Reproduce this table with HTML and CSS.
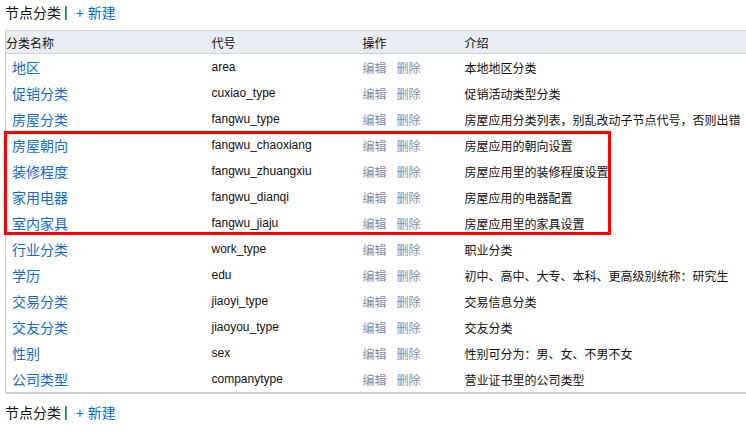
FILE: index.html
```html
<!DOCTYPE html>
<html>
<head>
<meta charset="utf-8">
<link rel="stylesheet" href="styles.css">
</head>
<body>
<div class="page">
  <div class="bar"><span class="title">节点分类</span><span class="sep">|</span><a class="add">+ 新建</a></div>
  <div class="wrap">
    <table class="grid">
      <colgroup><col class="c1"><col class="c2"><col class="c3"><col class="c4"></colgroup>
      <thead>
        <tr><th class="first">分类名称</th><th>代号</th><th>操作</th><th>介绍</th></tr>
      </thead>
      <tbody>
        <tr><td class="name">地区</td><td>area</td><td class="ops"><a>编辑</a><a>删除</a></td><td>本地地区分类</td></tr>
        <tr><td class="name">促销分类</td><td>cuxiao_type</td><td class="ops"><a>编辑</a><a>删除</a></td><td>促销活动类型分类</td></tr>
        <tr><td class="name">房屋分类</td><td>fangwu_type</td><td class="ops"><a>编辑</a><a>删除</a></td><td>房屋应用分类列表，别乱改动子节点代号，否则出错</td></tr>
        <tr><td class="name">房屋朝向</td><td>fangwu_chaoxiang</td><td class="ops"><a>编辑</a><a>删除</a></td><td>房屋应用的朝向设置</td></tr>
        <tr><td class="name">装修程度</td><td>fangwu_zhuangxiu</td><td class="ops"><a>编辑</a><a>删除</a></td><td>房屋应用里的装修程度设置</td></tr>
        <tr><td class="name">家用电器</td><td>fangwu_dianqi</td><td class="ops"><a>编辑</a><a>删除</a></td><td>房屋应用的电器配置</td></tr>
        <tr><td class="name">室内家具</td><td>fangwu_jiaju</td><td class="ops"><a>编辑</a><a>删除</a></td><td>房屋应用里的家具设置</td></tr>
        <tr><td class="name">行业分类</td><td>work_type</td><td class="ops"><a>编辑</a><a>删除</a></td><td>职业分类</td></tr>
        <tr><td class="name">学历</td><td>edu</td><td class="ops"><a>编辑</a><a>删除</a></td><td>初中、高中、大专、本科、更高级别统称：研究生</td></tr>
        <tr><td class="name">交易分类</td><td>jiaoyi_type</td><td class="ops"><a>编辑</a><a>删除</a></td><td>交易信息分类</td></tr>
        <tr><td class="name">交友分类</td><td>jiaoyou_type</td><td class="ops"><a>编辑</a><a>删除</a></td><td>交友分类</td></tr>
        <tr><td class="name">性别</td><td>sex</td><td class="ops"><a>编辑</a><a>删除</a></td><td>性别可分为：男、女、不男不女</td></tr>
        <tr><td class="name">公司类型</td><td>companytype</td><td class="ops"><a>编辑</a><a>删除</a></td><td>营业证书里的公司类型</td></tr>
      </tbody>
    </table>
    <div class="highlight"></div>
  </div>
  <div class="bar bottom"><span class="title">节点分类</span><span class="sep">|</span><a class="add">+ 新建</a></div>
</div>
</body>
</html>
```
FILE: styles.css
```css
html, body {
  margin: 0;
  padding: 0;
  background: #fff;
  overflow: hidden;
}
body {
  font-family: "Liberation Sans", "Noto Sans CJK SC", sans-serif;
  font-size: 12px;
  color: #000;
}
.page {
  padding-left: 5px;
}
.bar {
  height: 30px;
  display: flex;
  align-items: center;
  font-size: 14px;
  padding-bottom: 6px;
  box-sizing: border-box;
}
.bar.bottom {
  height: 36px;
  padding-bottom: 0;
}
.title {
  color: #111;
}
.sep {
  margin: 0 8px 0 3px;
  color: #111;
}
.add {
  color: #1569c7;
}
.wrap {
  position: relative;
}
.grid {
  border-collapse: collapse;
  width: 741px;
  border-left: 1px solid #c8c8c8;
  border-bottom: 2px solid #cfcfcf;
  table-layout: fixed;
}
.c1 { width: 200px; }
.c2 { width: 151px; }
.c3 { width: 102px; }
.c4 { width: 288px; }
thead th {
  background: #e8ecf3;
  border-top: 1px solid #d0d6e0;
  border-bottom: 1px solid #c9d2e0;
  height: 22px;
  padding: 0 0 0 6px;
  font-weight: normal;
  text-align: left;
  font-size: 12px;
  color: #111;
}
thead th.first {
  padding-left: 0;
}
tbody td {
  height: 26px;
  padding: 0 0 0 6px;
  white-space: nowrap;
  color: #111;
}
tbody td.name {
  font-size: 14px;
  color: #1569c7;
}
.ops a {
  color: #7f8ea6;
  margin-right: 10px;
}
.highlight {
  position: absolute;
  left: -1px;
  top: 101px;
  width: 601px;
  height: 98px;
  border: 3px solid #f00;
}
```
